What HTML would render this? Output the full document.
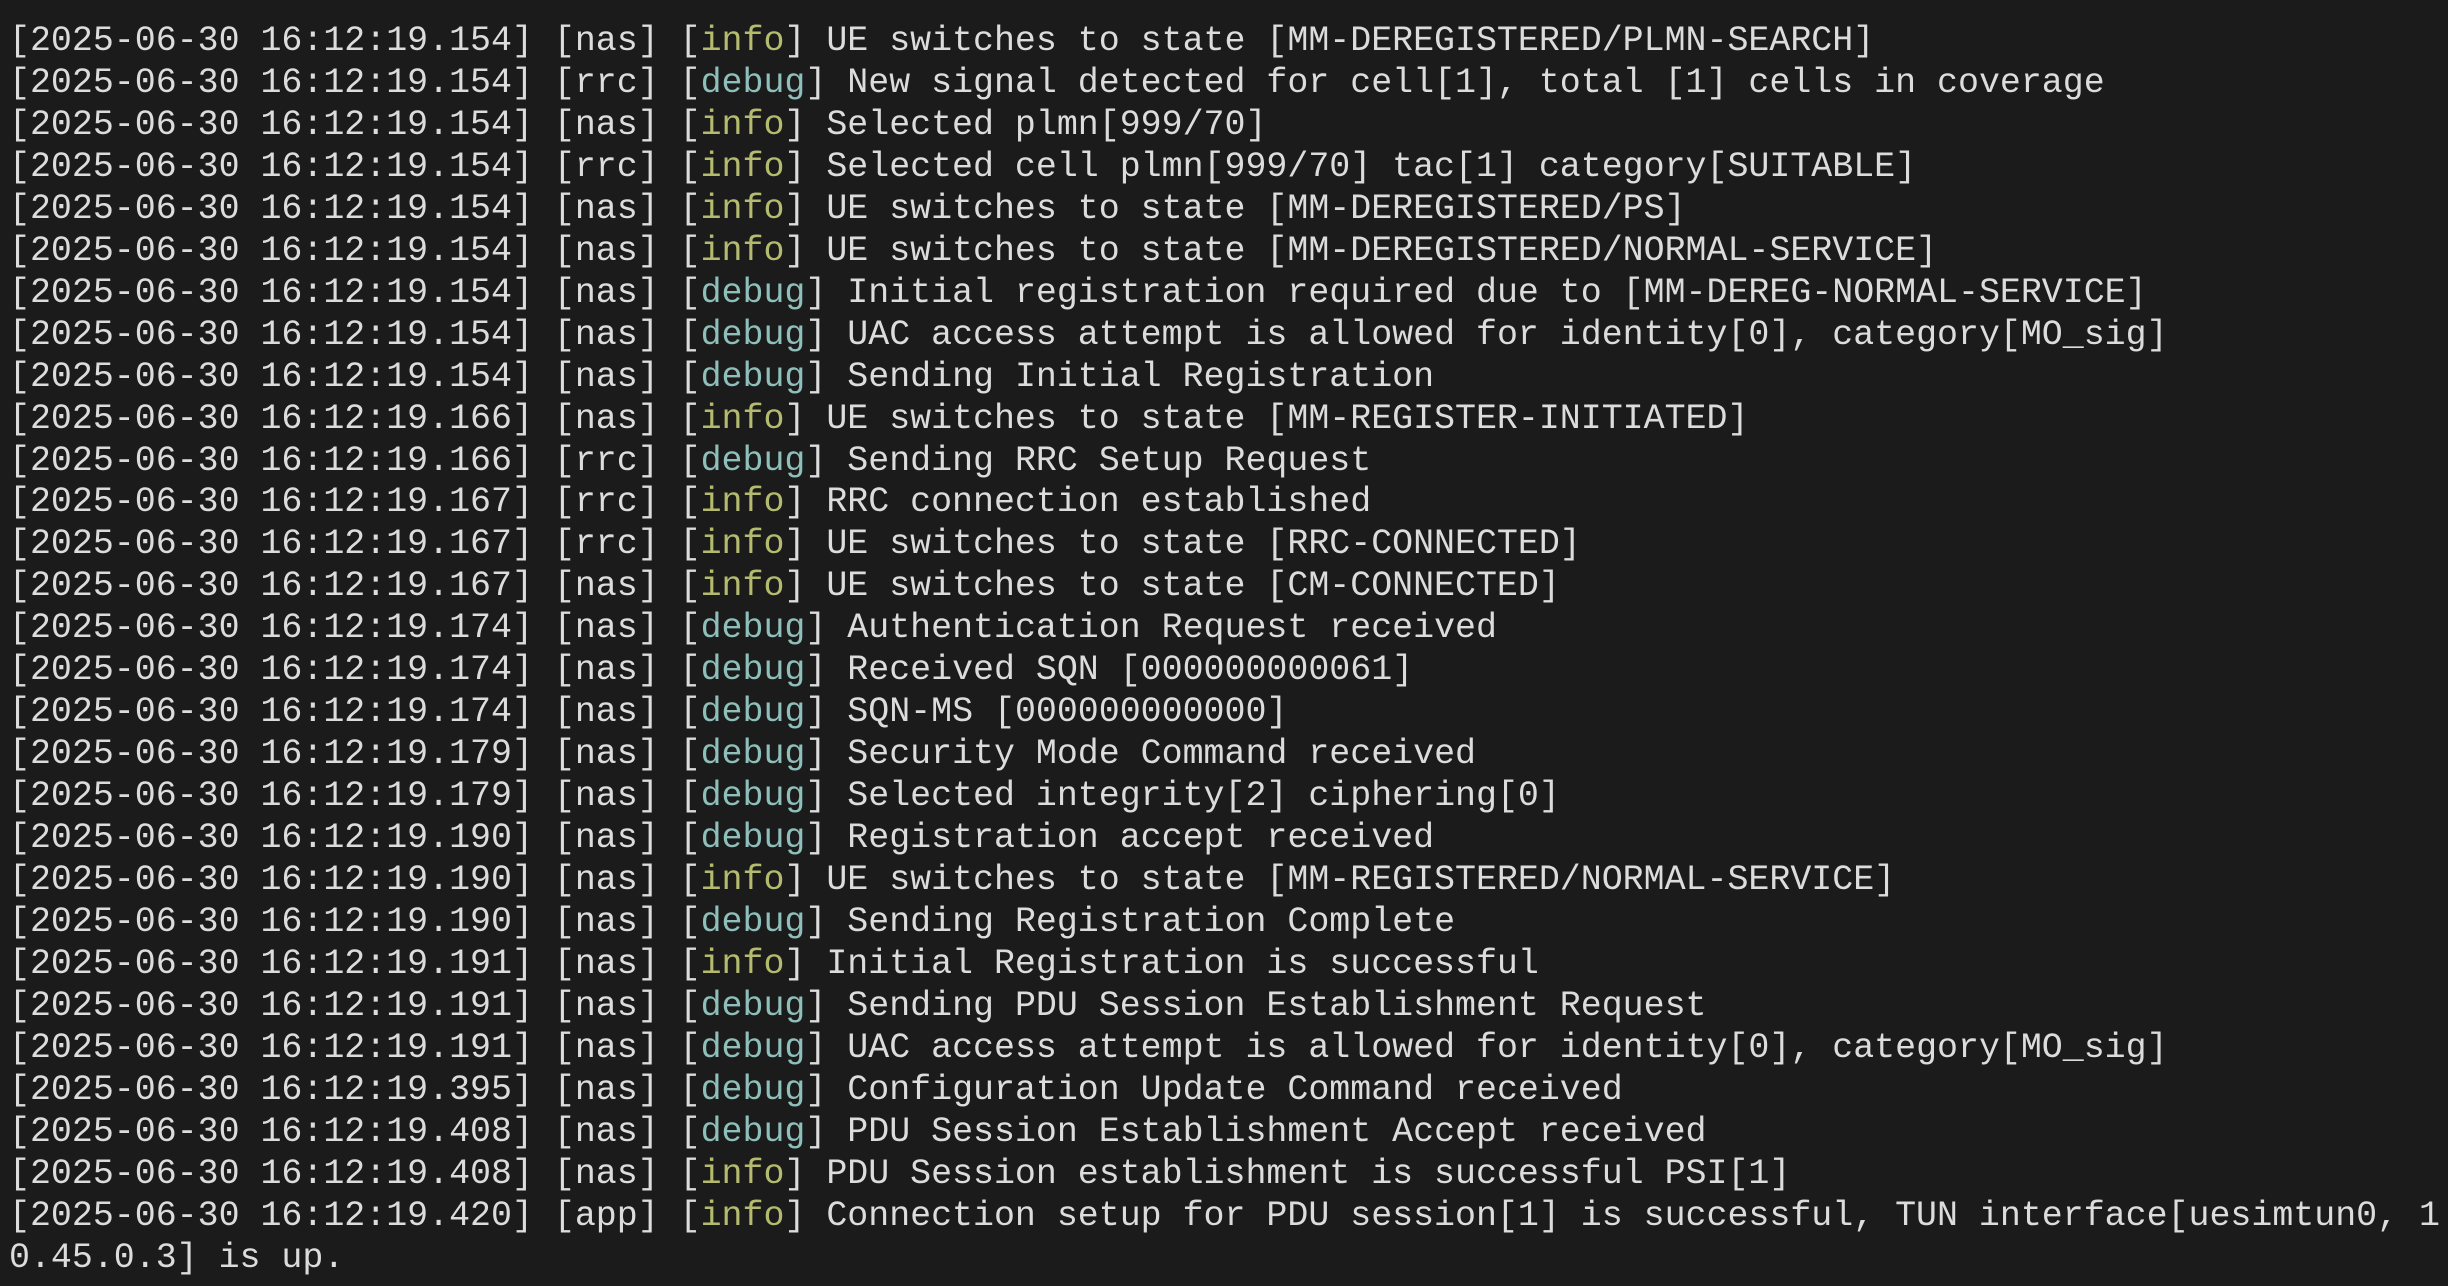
<!DOCTYPE html>
<html><head><meta charset="utf-8"><style>
html,body{margin:0;padding:0;background:#1b1b1b;width:2448px;height:1286px;overflow:hidden}
pre{margin:0;padding:21px 0 0 9px;font-family:"Liberation Mono",monospace;font-size:34.94px;line-height:41.95px;color:#dcdcdc;white-space:pre}
.i{color:#b4bb6e}.d{color:#8ebfba}
</style></head><body><pre>[2025-06-30 16:12:19.154] [nas] [<span class="i">info</span>] UE switches to state [MM-DEREGISTERED/PLMN-SEARCH]
[2025-06-30 16:12:19.154] [rrc] [<span class="d">debug</span>] New signal detected for cell[1], total [1] cells in coverage
[2025-06-30 16:12:19.154] [nas] [<span class="i">info</span>] Selected plmn[999/70]
[2025-06-30 16:12:19.154] [rrc] [<span class="i">info</span>] Selected cell plmn[999/70] tac[1] category[SUITABLE]
[2025-06-30 16:12:19.154] [nas] [<span class="i">info</span>] UE switches to state [MM-DEREGISTERED/PS]
[2025-06-30 16:12:19.154] [nas] [<span class="i">info</span>] UE switches to state [MM-DEREGISTERED/NORMAL-SERVICE]
[2025-06-30 16:12:19.154] [nas] [<span class="d">debug</span>] Initial registration required due to [MM-DEREG-NORMAL-SERVICE]
[2025-06-30 16:12:19.154] [nas] [<span class="d">debug</span>] UAC access attempt is allowed for identity[0], category[MO_sig]
[2025-06-30 16:12:19.154] [nas] [<span class="d">debug</span>] Sending Initial Registration
[2025-06-30 16:12:19.166] [nas] [<span class="i">info</span>] UE switches to state [MM-REGISTER-INITIATED]
[2025-06-30 16:12:19.166] [rrc] [<span class="d">debug</span>] Sending RRC Setup Request
[2025-06-30 16:12:19.167] [rrc] [<span class="i">info</span>] RRC connection established
[2025-06-30 16:12:19.167] [rrc] [<span class="i">info</span>] UE switches to state [RRC-CONNECTED]
[2025-06-30 16:12:19.167] [nas] [<span class="i">info</span>] UE switches to state [CM-CONNECTED]
[2025-06-30 16:12:19.174] [nas] [<span class="d">debug</span>] Authentication Request received
[2025-06-30 16:12:19.174] [nas] [<span class="d">debug</span>] Received SQN [000000000061]
[2025-06-30 16:12:19.174] [nas] [<span class="d">debug</span>] SQN-MS [000000000000]
[2025-06-30 16:12:19.179] [nas] [<span class="d">debug</span>] Security Mode Command received
[2025-06-30 16:12:19.179] [nas] [<span class="d">debug</span>] Selected integrity[2] ciphering[0]
[2025-06-30 16:12:19.190] [nas] [<span class="d">debug</span>] Registration accept received
[2025-06-30 16:12:19.190] [nas] [<span class="i">info</span>] UE switches to state [MM-REGISTERED/NORMAL-SERVICE]
[2025-06-30 16:12:19.190] [nas] [<span class="d">debug</span>] Sending Registration Complete
[2025-06-30 16:12:19.191] [nas] [<span class="i">info</span>] Initial Registration is successful
[2025-06-30 16:12:19.191] [nas] [<span class="d">debug</span>] Sending PDU Session Establishment Request
[2025-06-30 16:12:19.191] [nas] [<span class="d">debug</span>] UAC access attempt is allowed for identity[0], category[MO_sig]
[2025-06-30 16:12:19.395] [nas] [<span class="d">debug</span>] Configuration Update Command received
[2025-06-30 16:12:19.408] [nas] [<span class="d">debug</span>] PDU Session Establishment Accept received
[2025-06-30 16:12:19.408] [nas] [<span class="i">info</span>] PDU Session establishment is successful PSI[1]
[2025-06-30 16:12:19.420] [app] [<span class="i">info</span>] Connection setup for PDU session[1] is successful, TUN interface[uesimtun0, 1
0.45.0.3] is up.</pre></body></html>
